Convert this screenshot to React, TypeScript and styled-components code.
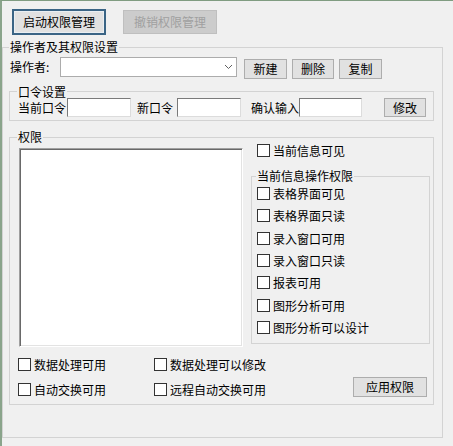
import React from 'react';
import styled, { createGlobalStyle } from 'styled-components';

const GlobalStyle = createGlobalStyle`
  html, body {
    margin: 0;
    padding: 0;
    background: #f0f0f0;
  }
  * {
    box-sizing: border-box;
  }
  body {
    font-family: "Noto Sans CJK SC", "Microsoft YaHei", sans-serif;
    font-size: 12px;
    color: #000;
  }
`;

const Window = styled.div`
  width: 453px;
  height: 446px;
  background: #f0f0f0;
  border-top: 1px solid #809c81;
  border-left: 2px solid #8aa48b;
  overflow: hidden;
`;

const TopBar = styled.div`
  display: flex;
  align-items: center;
  padding: 8px 0 0 10px;
`;

const Button = styled.button<{ $w: number; $h?: number; $primary?: boolean; $ml?: number }>`
  width: ${({ $w }) => $w}px;
  height: ${({ $h }) => $h ?? 20}px;
  margin: 0 0 0 ${({ $ml }) => $ml ?? 0}px;
  padding: 0;
  font: inherit;
  font-size: 12px;
  line-height: 14px;
  color: #000;
  background: #e1e1e1;
  border: 1px solid #adadad;
  ${({ $primary }) =>
    $primary &&
    `
    border: 2px solid #3a6485;
    box-shadow: inset 0 0 0 1px #e9eef2;
  `}
  &:disabled {
    background: #cccccc;
    border-color: #bfbfbf;
    color: #a0a0a0;
  }
`;

const Group = styled.fieldset<{ $w: number; $h?: number; $pl: number; $mt?: number; $pb?: number }>`
  margin: ${({ $mt }) => $mt ?? 0}px 0 0 0;
  padding: 0 0 ${({ $pb }) => $pb ?? 0}px ${({ $pl }) => $pl}px;
  width: ${({ $w }) => $w}px;
  ${({ $h }) => ($h ? `height: ${$h}px;` : '')}
  min-width: 0;
  border: 1px solid #d3d3d3;
`;

const Legend = styled.legend<{ $lh?: number; $ml?: number }>`
  padding: 0 1px;
  margin-left: ${({ $ml }) => $ml ?? -1}px;
  font-size: 12px;
  line-height: ${({ $lh }) => $lh ?? 14}px;
  height: ${({ $lh }) => $lh ?? 14}px;
`;

const OperatorRow = styled.div`
  display: flex;
  align-items: flex-start;
  margin-top: 3px;
  padding-left: 1px;
  height: 22px;
`;

const FieldLabel = styled.span<{ $w: number; $ml?: number }>`
  width: ${({ $w }) => $w}px;
  margin-left: ${({ $ml }) => $ml ?? 0}px;
  flex: none;
  line-height: 20px;
  white-space: nowrap;
`;

const Combo = styled.div`
  width: 177px;
  height: 20px;
  background: #fff;
  border: 1px solid #acacac;
  display: flex;
  align-items: center;
  justify-content: flex-end;
  padding-right: 3px;
  flex: none;
`;

const RowButtons = styled.div`
  display: flex;
  gap: 5px;
  margin: 2px 0 0 7px;
`;

const PwdRow = styled.div`
  display: flex;
  align-items: center;
  height: 19px;
`;

const TextInput = styled.input<{ $w: number }>`
  width: ${({ $w }) => $w}px;
  height: 19px;
  margin: 0;
  padding: 0 2px;
  flex: none;
  background: #fff;
  border: 1px solid;
  border-color: #7a7a7a #dcdcdc #dcdcdc #7a7a7a;
  font: inherit;
  outline: none;
`;

const TopSection = styled.div`
  display: flex;
  height: 203px;
`;

const ListBox = styled.div`
  width: 224px;
  height: 199px;
  margin-top: 4px;
  background: #fff;
  border: 1px solid;
  border-color: #a0a0a0 #fff #fff #a0a0a0;
  box-shadow: inset 1px 1px 0 #696969, inset -1px -1px 0 #e3e3e3;
  flex: none;
`;

const RightColumn = styled.div`
  width: 179px;
  margin-left: 8px;
  display: flex;
  flex-direction: column;
`;

const CheckList = styled.div`
  display: flex;
  flex-direction: column;
  gap: 9.33px;
  padding-top: 5px;
`;

const Check = styled.label<{ $ml?: number }>`
  display: flex;
  align-items: center;
  height: 13px;
  line-height: 13px;
  margin-left: ${({ $ml }) => $ml ?? 0}px;
  white-space: nowrap;
`;

const Box = styled.span`
  width: 13px;
  height: 13px;
  flex: none;
  margin-right: 3px;
  background: #fff;
  border: 1px solid #333;
`;

const BottomSection = styled.div`
  display: flex;
  align-items: flex-end;
  margin-top: 11px;
`;

const CheckGrid = styled.div`
  display: grid;
  grid-template-columns: 136px 150px;
  row-gap: 12px;
  margin-left: -1px;
`;

const CheckBox: React.FC<{ label: string; ml?: number }> = ({ label, ml }) => (
  <Check $ml={ml}>
    <Box />
    {label}
  </Check>
);

const Chevron = () => (
  <svg width="9" height="6" viewBox="0 0 9 6">
    <polyline points="1,1 4.5,4.5 8,1" fill="none" stroke="#606060" strokeWidth="1" />
  </svg>
);

const opRights = ['表格界面可见', '表格界面只读', '录入窗口可用', '录入窗口只读', '报表可用', '图形分析可用', '图形分析可以设计'];

export default function App() {
  return (
    <>
      <GlobalStyle />
      <Window>
        <TopBar>
          <Button $w={94} $h={26} $primary>启动权限管理</Button>
          <Button $w={94} $h={24} $ml={17} disabled>撤销权限管理</Button>
        </TopBar>

        <Group $w={441} $h={398} $pl={6} $mt={5}>
          <Legend $ml={0}>操作者及其权限设置</Legend>
          <OperatorRow>
            <FieldLabel $w={50}>操作者:</FieldLabel>
            <Combo>
              <Chevron />
            </Combo>
            <RowButtons>
              <Button $w={43}>新建</Button>
              <Button $w={42}>删除</Button>
              <Button $w={43}>复制</Button>
            </RowButtons>
          </OperatorRow>

          <Group $w={425} $pl={8} $mt={6} $pb={3}>
            <Legend $lh={13}>口令设置</Legend>
            <PwdRow>
              <FieldLabel $w={49}>当前口令</FieldLabel>
              <TextInput $w={64} />
              <FieldLabel $w={40} $ml={6}>新口令</FieldLabel>
              <TextInput $w={64} />
              <FieldLabel $w={48} $ml={10}>确认输入</FieldLabel>
              <TextInput $w={63} />
              <Button $w={42} $h={19} $ml={22}>修改</Button>
            </PwdRow>
          </Group>

          <Group $w={425} $h={275} $pl={9} $mt={9}>
            <Legend $ml={-2}>权限</Legend>
            <TopSection>
              <ListBox />
              <RightColumn>
                <CheckBox label="当前信息可见" ml={6} />
                <Group $w={179} $pl={5} $mt={13} $pb={9}>
                  <Legend $lh={12}>当前信息操作权限</Legend>
                  <CheckList>
                    {opRights.map((r) => (
                      <CheckBox key={r} label={r} />
                    ))}
                  </CheckList>
                </Group>
              </RightColumn>
            </TopSection>
            <BottomSection>
              <CheckGrid>
                <CheckBox label="数据处理可用" />
                <CheckBox label="数据处理可以修改" />
                <CheckBox label="自动交换可用" />
                <CheckBox label="远程自动交换可用" />
              </CheckGrid>
              <Button $w={74} $ml={49} style={{ marginBottom: -1 }}>应用权限</Button>
            </BottomSection>
          </Group>
        </Group>
      </Window>
    </>
  );
}
